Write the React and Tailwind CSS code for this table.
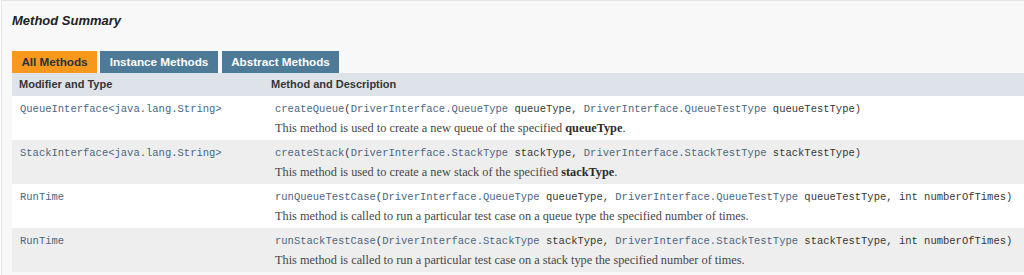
import React from "react";

const rows = [
  {
    type: "QueueInterface<java.lang.String>",
    name: "createQueue",
    params: [
      ["DriverInterface.QueueType", "queueType"],
      ["DriverInterface.QueueTestType", "queueTestType"],
    ],
    desc: "This method is used to create a new queue of the specified ",
    bold: "queueType",
    tail: ".",
  },
  {
    type: "StackInterface<java.lang.String>",
    name: "createStack",
    params: [
      ["DriverInterface.StackType", "stackType"],
      ["DriverInterface.StackTestType", "stackTestType"],
    ],
    desc: "This method is used to create a new stack of the specified ",
    bold: "stackType",
    tail: ".",
  },
  {
    type: "RunTime",
    name: "runQueueTestCase",
    params: [
      ["DriverInterface.QueueType", "queueType"],
      ["DriverInterface.QueueTestType", "queueTestType"],
      ["int", "numberOfTimes", true],
    ],
    desc: "This method is called to run a particular test case on a queue type the specified number of times.",
  },
  {
    type: "RunTime",
    name: "runStackTestCase",
    params: [
      ["DriverInterface.StackType", "stackType"],
      ["DriverInterface.StackTestType", "stackTestType"],
      ["int", "numberOfTimes", true],
    ],
    desc: "This method is called to run a particular test case on a stack type the specified number of times.",
  },
];

function Tab({ label, active, width }) {
  return (
    <span
      className={`h-[22px] ${width} flex items-center justify-center text-[11.7px] font-bold ${
        active ? "bg-[#f8981d] text-[#253441]" : "bg-[#4d7a97] text-white"
      }`}
    >
      {label}
    </span>
  );
}

function Row({ row, odd }) {
  return (
    <div className={`flex h-[44px] ${odd ? "bg-[#eeeeee]" : "bg-white"}`}>
      {/* modifier and type */}
      <div className="w-[259px] shrink-0 pl-[8px] pt-[6px] font-['Liberation_Mono',monospace] text-[10.5px] leading-[14px] text-[#4a6782]">
        {row.type}
      </div>
      {/* method and description */}
      <div className="flex-1 pl-[4px] pt-[6px] whitespace-nowrap">
        <div className="font-['Liberation_Mono',monospace] text-[10.5px] leading-[14px] text-[#353833]">
          <span className="text-[#4a6782]">{row.name}</span>(
          {row.params.map(([t, n, prim], i) => (
            <span key={i}>
              {i > 0 && ", "}
              <span className={prim ? "" : "text-[#4a6782]"}>{t}</span> {n}
            </span>
          ))}
          )
        </div>
        <div className="mt-[5px] font-['Liberation_Serif',serif] text-[12.3px] leading-[14px] text-[#474747]">
          {row.desc}
          {row.bold && <b className="text-[#2b2b2b]">{row.bold}</b>}
          {row.tail}
        </div>
      </div>
    </div>
  );
}

export default function App() {
  return (
    <div className="w-[1024px] h-[275px] bg-white overflow-hidden font-['Liberation_Sans',Arial,sans-serif]">
      <div className="ml-px h-[275px] border-t border-l border-[#e6e6e6] bg-[#f8f8f8] pl-[10px]">
        <h3 className="pt-[12px] text-[13px] leading-[16px] font-bold italic text-[#222222]">
          Method Summary
        </h3>
        {/* tabs */}
        <div className="mt-[22px] flex">
          <Tab label="All Methods" active width="w-[85px]" />
          <span className="w-[3px]" />
          <Tab label="Instance Methods" width="w-[118px]" />
          <span className="w-[4px]" />
          <Tab label="Abstract Methods" width="w-[117px]" />
        </div>
        {/* header */}
        <div className="flex h-[23px] items-center bg-[#dee3e9] text-[11px] font-bold text-[#353535]">
          <div className="w-[259px] shrink-0 pl-[7px]">Modifier and Type</div>
          <div className="flex-1">Method and Description</div>
        </div>
        {rows.map((r, i) => (
          <Row key={i} row={r} odd={i % 2 === 1} />
        ))}
      </div>
    </div>
  );
}
